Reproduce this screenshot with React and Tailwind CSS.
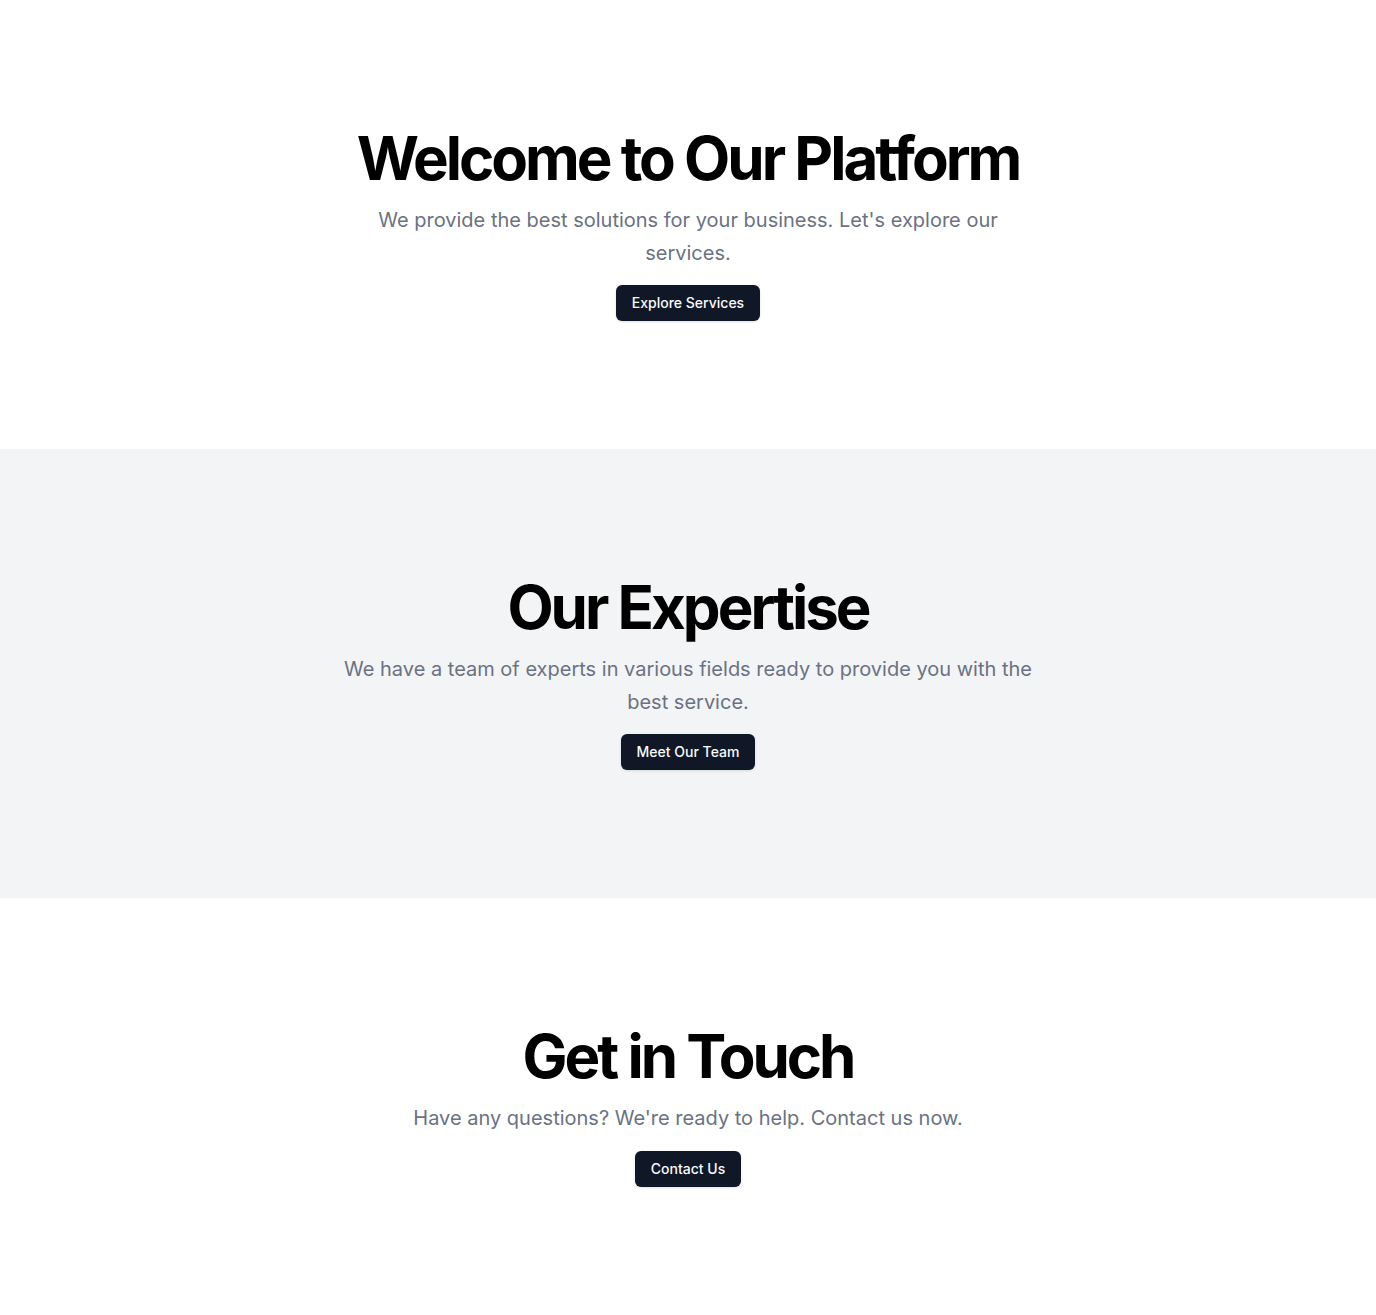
import React from 'react';

const sections = [
  {
    title: 'Welcome to Our Platform',
    text: "We provide the best solutions for your business. Let's explore our services.",
    cta: 'Explore Services',
    bg: 'bg-white',
  },
  {
    title: 'Our Expertise',
    text: 'We have a team of experts in various fields ready to provide you with the best service.',
    cta: 'Meet Our Team',
    bg: 'bg-gray-100',
  },
  {
    title: 'Get in Touch',
    text: "Have any questions? We're ready to help. Contact us now.",
    cta: 'Contact Us',
    bg: 'bg-white',
  },
];

const Section = ({ title, text, cta, bg }) => (
  <section className={`w-full py-32 ${bg}`}>
    <div className="mx-auto px-6 flex flex-col items-center gap-4 text-center">
      <h1 className="text-6xl/none font-bold tracking-tighter text-black">{title}</h1>
      <p className="max-w-[700px] text-xl leading-relaxed text-gray-500">{text}</p>
      <a
        href="#"
        className="inline-flex h-9 items-center justify-center rounded-md bg-gray-900 px-4 text-sm font-medium text-gray-50 shadow"
      >
        {cta}
      </a>
    </div>
  </section>
);

export default function App() {
  return (
    <div className="min-h-screen bg-white font-['Inter',sans-serif]">
      {sections.map((s) => (
        <Section key={s.title} {...s} />
      ))}
    </div>
  );
}
